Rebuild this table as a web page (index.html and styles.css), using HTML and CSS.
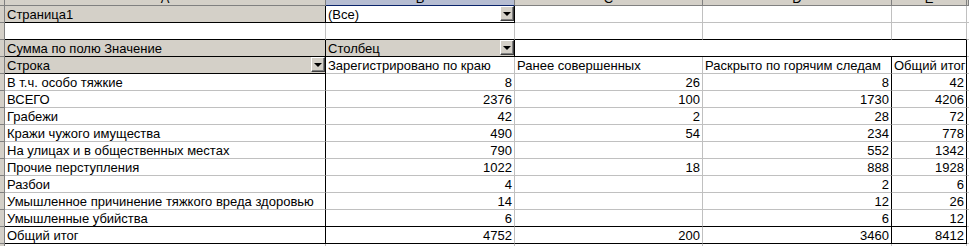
FILE: index.html
```html
<!DOCTYPE html>
<html>
<head>
<meta charset="utf-8">
<link rel="stylesheet" href="styles.css">
</head>
<body>
<div class="sheet">
  <!-- column headers -->
  <div class="c rh corner"></div>
  <div class="c ch"><div class="chl">A</div></div>
  <div class="c ch sel"><div class="chl">B</div></div>
  <div class="c ch"><div class="chl">C</div></div>
  <div class="c ch"><div class="chl">D</div></div>
  <div class="c ch"><div class="chl">E</div></div>
  <div class="c ch"></div>

  <!-- row 1 -->
  <div class="c rh"></div>
  <div class="c fld bR bB">Страница1</div>
  <div class="c dd bR bB"><span>(Все)</span><span class="btn"><span class="tri"></span></span></div>
  <div class="c"></div>
  <div class="c"></div>
  <div class="c"></div>
  <div class="c"></div>

  <!-- row 2 -->
  <div class="c rh"></div>
  <div class="c bB"></div>
  <div class="c bB"></div>
  <div class="c bB"></div>
  <div class="c bB"></div>
  <div class="c bB"></div>
  <div class="c"></div>

  <!-- row 3 -->
  <div class="c rh"></div>
  <div class="c fld bR bB">Сумма по полю Значение</div>
  <div class="c fld dd bR bB"><span>Столбец</span><span class="btn"><span class="tri"></span></span></div>
  <div class="c span3 bR bB"></div>
  <div class="c"></div>

  <!-- row 4 -->
  <div class="c rh"></div>
  <div class="c fld dd bR bB"><span>Строка</span><span class="btn"><span class="tri"></span></span></div>
  <div class="c">Зарегистрировано по краю</div>
  <div class="c">Ранее совершенных</div>
  <div class="c bR">Раскрыто по горячим следам</div>
  <div class="c bR">Общий итог</div>
  <div class="c"></div>

  <!-- data rows -->
  <div class="c rh"></div>
  <div class="c bR">В т.ч. особо тяжкие</div>
  <div class="c num">8</div>
  <div class="c num">26</div>
  <div class="c num bR">8</div>
  <div class="c num bR">42</div>
  <div class="c"></div>

  <div class="c rh"></div>
  <div class="c bR">ВСЕГО</div>
  <div class="c num">2376</div>
  <div class="c num">100</div>
  <div class="c num bR">1730</div>
  <div class="c num bR">4206</div>
  <div class="c"></div>

  <div class="c rh"></div>
  <div class="c bR">Грабежи</div>
  <div class="c num">42</div>
  <div class="c num">2</div>
  <div class="c num bR">28</div>
  <div class="c num bR">72</div>
  <div class="c"></div>

  <div class="c rh"></div>
  <div class="c bR">Кражи чужого имущества</div>
  <div class="c num">490</div>
  <div class="c num">54</div>
  <div class="c num bR">234</div>
  <div class="c num bR">778</div>
  <div class="c"></div>

  <div class="c rh"></div>
  <div class="c bR">На улицах и в общественных местах</div>
  <div class="c num">790</div>
  <div class="c num"></div>
  <div class="c num bR">552</div>
  <div class="c num bR">1342</div>
  <div class="c"></div>

  <div class="c rh"></div>
  <div class="c bR">Прочие перступления</div>
  <div class="c num">1022</div>
  <div class="c num">18</div>
  <div class="c num bR">888</div>
  <div class="c num bR">1928</div>
  <div class="c"></div>

  <div class="c rh"></div>
  <div class="c bR">Разбои</div>
  <div class="c num">4</div>
  <div class="c num"></div>
  <div class="c num bR">2</div>
  <div class="c num bR">6</div>
  <div class="c"></div>

  <div class="c rh"></div>
  <div class="c bR">Умышленное причинение тяжкого вреда здоровью</div>
  <div class="c num">14</div>
  <div class="c num"></div>
  <div class="c num bR">12</div>
  <div class="c num bR">26</div>
  <div class="c"></div>

  <div class="c rh"></div>
  <div class="c bR bB">Умышленные убийства</div>
  <div class="c num bB">6</div>
  <div class="c num bB"></div>
  <div class="c num bR bB">6</div>
  <div class="c num bR bB">12</div>
  <div class="c"></div>

  <div class="c rh"></div>
  <div class="c bR bB">Общий итог</div>
  <div class="c num bB">4752</div>
  <div class="c num bB">200</div>
  <div class="c num bR bB">3460</div>
  <div class="c num bR bB">8412</div>
  <div class="c"></div>

  <!-- partial last row -->
  <div class="c rh"></div>
  <div class="c"></div>
  <div class="c"></div>
  <div class="c"></div>
  <div class="c"></div>
  <div class="c"></div>
  <div class="c"></div>
</div>
</body>
</html>
```

FILE: styles.css
```css
html, body {
  margin: 0;
  padding: 0;
  background: #ffffff;
}
.sheet {
  display: grid;
  grid-template-columns: 5px 321px 189px 188px 189px 75px 2px;
  grid-template-rows: 6px repeat(14, 17px) 3px;
  width: 969px;
  height: 246px;
  overflow: hidden;
  font-family: "Liberation Sans", Arial, sans-serif;
  font-size: 13px;
  color: #000000;
}
.c {
  box-sizing: border-box;
  border-right: 1px solid #c0c0c0;
  border-bottom: 1px solid #c0c0c0;
  padding: 1px 2px 0 2px;
  line-height: 15px;
  white-space: nowrap;
  overflow: hidden;
  min-width: 0;
}
.rh {
  background: #d4d0c8;
  border-right-color: #808080;
  border-bottom-color: #808080;
  padding: 0;
}
.ch {
  background: #d4d0c8;
  border-right-color: #808080;
  border-bottom-color: #808080;
  padding: 0;
  text-align: center;
}
.ch.sel {
  background: #b6bdd2;
  border-bottom-color: #0a246a;
}
.chl {
  margin-top: -10px;
  line-height: 17px;
}
.fld {
  background: #d4d0c8;
}
.bR { border-right-color: #000000; }
.bB { border-bottom-color: #000000; }
.num { text-align: right; }
.span3 { grid-column: span 3; }
.dd {
  display: flex;
  align-items: flex-start;
  padding-right: 0;
}
.dd > span:first-child {
  flex: 1;
  min-width: 0;
}
.btn {
  box-sizing: border-box;
  width: 14px;
  height: 15px;
  margin-top: -1px;
  background: #d4d0c8;
  border-top: 1px solid #ffffff;
  border-left: 1px solid #ffffff;
  border-right: 1px solid #404040;
  border-bottom: 1px solid #404040;
  box-shadow: inset -1px -1px 0 #808080;
  display: flex;
  align-items: center;
  justify-content: center;
}
.tri {
  width: 0;
  height: 0;
  border-left: 4px solid transparent;
  border-right: 4px solid transparent;
  border-top: 4px solid #000000;
}
```
